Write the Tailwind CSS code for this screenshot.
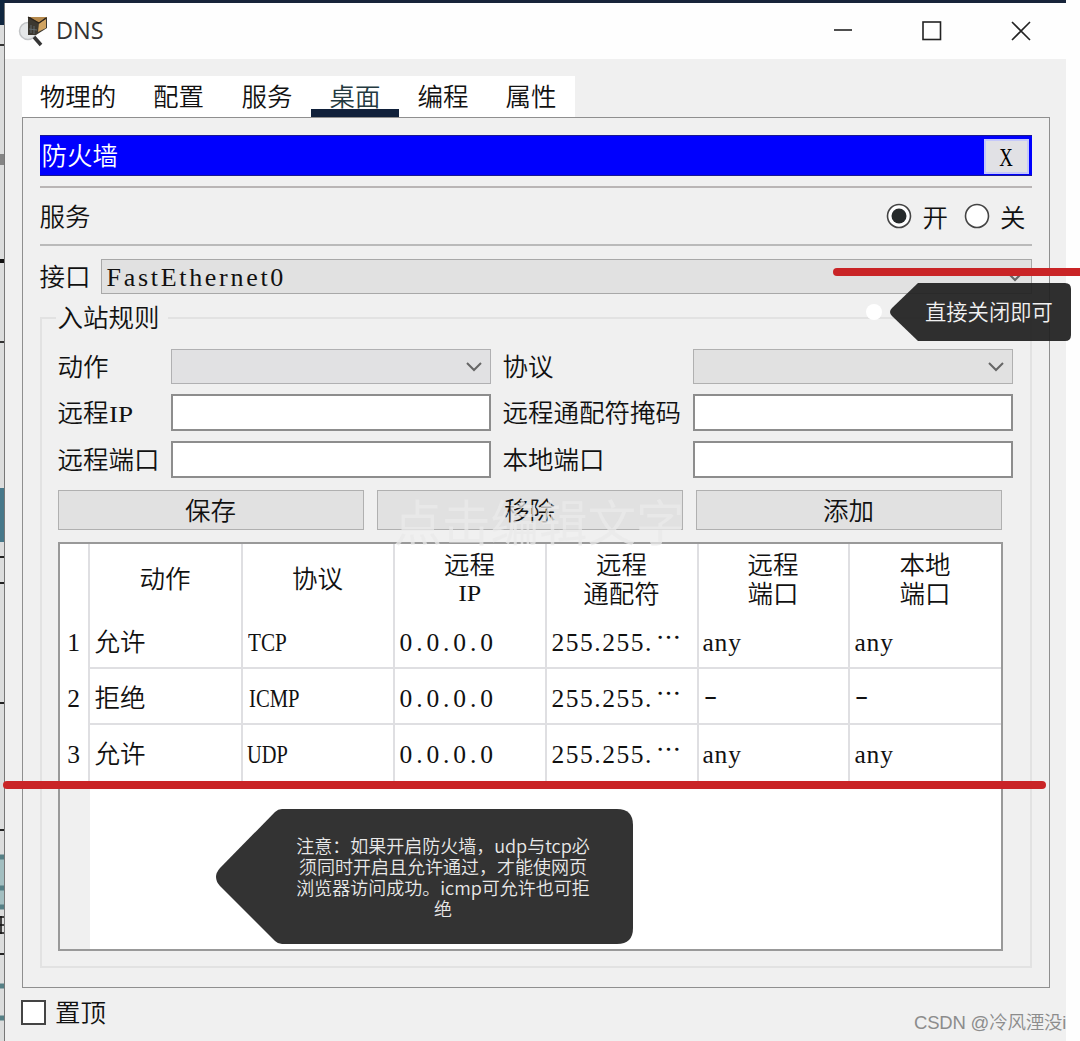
<!DOCTYPE html>
<html lang="zh-CN">

<head>
    <meta charset="UTF-8">
    <meta name="viewport" content="width=device-width, initial-scale=1.0">
    <title>DNS</title>
    <script src="https://cdn.jsdelivr.net/npm/@tailwindcss/browser@4"></script>
</head>

<body class="bg-white">
    <div class="relative flex w-[1080px] h-[1041px] overflow-hidden bg-[#fefefe] font-['Noto_Sans_CJK_SC',sans-serif] font-[350] text-[25.5px] text-[#111]">

        <!-- Sliver of the workspace behind the window -->
        <svg class="w-[5px] h-full shrink-0" viewBox="0 0 5 1041">
            <rect width="5" height="1041" fill="#dcdddd" />
            <rect width="5" height="25" fill="#10263f" />
            <rect y="44" width="5" height="2" fill="#333" />
            <rect y="154" width="5" height="11" fill="#858585" />
            <rect y="259" width="5" height="4" fill="#111" />
            <rect y="341" width="5" height="2" fill="#333" />
            <rect y="488" width="5" height="54" fill="#47788a" />
            <path d="M0 557H5M0 583H5M0 703H5M0 830H5M0 954H5" stroke="#222" stroke-width="2" />
            <rect y="856" width="5" height="52" fill="#a3bfc1" />
            <path d="M0 857H5M0 888H5M0 907H5M0 986H5M0 1018H5" stroke="#568086" stroke-width="5" />
            <path d="M0 917H5M0 925H5M0 933H5M1 916V934" stroke="#111" stroke-width="1.5" />
            <path d="M4.5 3V1041" stroke="#777" />
        </svg>

        <!-- Window -->
        <div class="flex flex-col w-[1061px] h-full shrink-0 bg-[#f0f0f0] border-t-[3px] border-[#17243a]">

            <!-- Title bar -->
            <div class="flex items-center h-[56px] bg-[#fefefe] pl-[13px] pr-[35px] shrink-0">
                <svg class="w-[32px] h-[32px] shrink-0" viewBox="0 0 32 32">
                    <circle cx="10" cy="16" r="8.500" fill="#e5e7e8" stroke="#c2c4c6" stroke-width="1.500" />
                    <path d="M16 22L23 30" stroke="#353535" stroke-width="3.500" />
                    <path d="M10 2L29 2L29 13L18 20L10 20Z" fill="#3c3830" />
                    <path d="M12 2L29 2L21 8Z" fill="#b68a4d" />
                    <path d="M21 8L28 4L28 13L20 17Z" fill="#d1a461" />
                    <path d="M10 2L21 8L28 3" stroke="#2c241b" stroke-width="1.200" fill="none" />
                    <path d="M13 10V18M16 11V19M11 14L19 15" stroke="#68747a" stroke-width=".8" />
                </svg>
                <div class="ml-[6px] font-['Open_Sans',sans-serif] font-normal text-[23.5px] text-[#333]">DNS</div>
                <svg class="ml-auto w-[198px] h-[24px]" viewBox="0 0 198 24" fill="none" stroke="#222" stroke-width="1.600">
                    <path d="M1 11H19" />
                    <rect x="90" y="3" width="17.500" height="17.500" />
                    <path d="M179 3L197 21M197 3L179 21" />
                </svg>
            </div>

            <!-- Tabs -->
            <div class="flex w-[553px] h-[41px] mt-[17px] ml-[17px] bg-white leading-[37px] text-center shrink-0">
                <div class="w-[112px]">物理的</div>
                <div class="w-[89px]">配置</div>
                <div class="w-[88px]">服务</div>
                <div class="w-[88px] border-b-[8px] border-[#10203a] text-[#243a40]">桌面</div>
                <div class="w-[88px]">编程</div>
                <div class="w-[88px]">属性</div>
            </div>

            <!-- Desktop panel -->
            <div class="w-[1028px] h-[871px] ml-[16.500px] border-[1.500px] border-[#8f8f8f] pt-[17px] px-[17px] shrink-0">
                <div class="flex h-[41px] bg-[#0000fe] border-y border-[#1a1a90] text-white">
                    <div class="pl-[2px] leading-[36px]">防火墙</div>
                    <button class="ml-auto mr-[3px] mt-[3px] w-[45px] h-[35px] bg-[#e1e1e5] border-2 border-[#c5c8fa] text-black font-['Liberation_Serif',serif] font-normal text-[25px] leading-[34px]"><span class="inline-block scale-x-75">X</span></button>
                </div>
                <div class="mt-[10px] h-[2px] bg-[#b9b5b5]"></div>

                <div class="flex items-center h-[56px] leading-[54px]">
                    <div class="-mt-[3px]">服务</div>
                    <svg class="ml-auto w-[26px] h-[26px]" viewBox="0 0 26 26">
                        <circle cx="13" cy="13" r="11.500" fill="#fff" stroke="#444" stroke-width="1.600" />
                        <circle cx="13" cy="13" r="7.500" fill="#262a2b" />
                    </svg>
                    <div class="ml-[10px] -mt-[1px]">开</div>
                    <svg class="ml-[16px] w-[26px] h-[26px]" viewBox="0 0 26 26">
                        <circle cx="13" cy="13" r="11.500" fill="#fff" stroke="#444" stroke-width="1.600" />
                    </svg>
                    <div class="ml-[10px] mr-[6px] -mt-[1px]">关</div>
                </div>
                <div class="h-[2px] bg-[#bababa]"></div>

                <div class="flex mt-[13px] h-[35px]">
                    <div class="w-[61px] leading-[32px]">接口</div>
                    <div class="flex items-center justify-between flex-1 bg-[#e1e1e1] border-[1.500px] border-[#a8a8a8] pl-[5px] pr-[7px] font-['Liberation_Serif',serif] font-normal text-[26px] tracking-[2.700px]">
                        <span class="pt-[2px]">FastEthernet0</span>
                        <svg class="w-[18px] h-[10px]" viewBox="0 0 18 10" fill="none" stroke="#666" stroke-width="2"><path d="M2 1L9 8L16 1" /></svg>
                    </div>
                </div>

                <!-- Inbound rules -->
                <div class="mt-[23px] h-[651px] border-2 border-[#e2e2e2] px-[16px]">
                    <div class="w-[112px] h-[30px] -mt-[18px] -ml-[2px] pl-[2px] bg-[#f0f0f0] leading-[30px] whitespace-nowrap">入站规则</div>
                    <div class="grid grid-cols-[113px_320px_202px_320px] grid-rows-[35px_37px_37px] gap-y-[10px] mt-[18px] leading-[31px] whitespace-nowrap">
                        <div>动作</div>
                        <div class="flex items-center justify-end bg-[#e1e1e3] border-[1.500px] border-[#b0b0b2] pr-[7px]">
                            <svg class="w-[18px] h-[10px]" viewBox="0 0 18 10" fill="none" stroke="#666" stroke-width="2"><path d="M2 1L9 8L16 1" /></svg>
                        </div>
                        <div class="pl-[12px]">协议</div>
                        <div class="flex items-center justify-end bg-[#e1e1e1] border-[1.500px] border-[#b0b0b0] pr-[7px]">
                            <svg class="w-[18px] h-[10px]" viewBox="0 0 18 10" fill="none" stroke="#666" stroke-width="2"><path d="M2 1L9 8L16 1" /></svg>
                        </div>
                        <div class="leading-[34px]">远程<span class="inline-block origin-left scale-x-[1.130] font-['Liberation_Serif',serif] font-normal text-[24px] leading-[30px]">IP</span></div>
                        <div class="bg-white border-2 border-[#8d8d8d]"></div>
                        <div class="pl-[12px] leading-[34px]">远程通配符掩码</div>
                        <div class="bg-white border-2 border-[#8d8d8d]"></div>
                        <div class="leading-[34px]">远程端口</div>
                        <div class="bg-white border-2 border-[#8d8d8d]"></div>
                        <div class="pl-[12px] leading-[34px]">本地端口</div>
                        <div class="bg-white border-2 border-[#8d8d8d]"></div>
                    </div>

                    <div class="relative flex gap-[13px] mt-[12px] h-[40px] leading-[35px] text-center">
                        <div class="w-[306px] bg-[#e1e1e1] border-[1.500px] border-[#b0b0b0]">保存</div>
                        <div class="w-[306px] bg-[#e1e1e1] border-[1.500px] border-[#b0b0b0]">移除</div>
                        <div class="w-[306px] bg-[#e1e1e1] border-[1.500px] border-[#b0b0b0]">添加</div>
                        <!-- Empty text placeholder left on the canvas -->
                        <div class="absolute left-[336px] top-[5px] text-[48.500px] leading-[50px] font-normal text-[#e9e9e9]/75 whitespace-nowrap">点击编辑文字</div>
                    </div>

                    <!-- Rule table -->
                    <div class="mt-[12px] w-[945px] h-[409px] border-2 border-[#999] bg-white">
                        <div class="grid grid-cols-[30px_153px_152px_152px_152px_151px_151px] grid-rows-[69px_56px_56px_56px] h-[405px] bg-[linear-gradient(90deg,#f0f0f0_30px,#fff_30px)] leading-[29px]">
                            <div class="bg-white border-r-2 border-[#dfdfe2]"></div>
                            <div class="grid place-items-center border-r-2 border-[#dfdfe2] pb-[4px]">动作</div>
                            <div class="grid place-items-center border-r-2 border-[#dfdfe2] pb-[4px]">协议</div>
                            <div class="border-r-2 border-[#dfdfe2] pt-[4px] text-center">
                                <div class="h-[29px]">远程</div>
                                <div class="h-[29px] leading-[32px] font-['Liberation_Serif',serif] font-normal text-[24px]"><span class="inline-block scale-x-[1.080]">IP</span></div>
                            </div>
                            <div class="border-r-2 border-[#dfdfe2] pt-[4px] text-center">远程<br>通配符</div>
                            <div class="border-r-2 border-[#dfdfe2] pt-[4px] text-center">远程<br>端口</div>
                            <div class="pt-[4px] text-center">本地<br>端口</div>

                            <div class="bg-white border-r-2 border-[#dfdfe2] text-center leading-[60px] font-['Liberation_Serif',serif] font-normal">1</div>
                            <div class="border-r-2 border-b-2 border-[#dfdfe2] pl-[5px] leading-[53px]">允许</div>
                            <div class="border-r-2 border-b-2 border-[#dfdfe2] pl-[5px] leading-[60px] font-['Liberation_Serif',serif] font-normal"><span class="inline-block origin-left scale-x-[0.830]">TCP</span></div>
                            <div class="border-r-2 border-b-2 border-[#dfdfe2] pl-[5px] leading-[60px] font-['Liberation_Serif',serif] font-normal tracking-[3.900px]">0.0.0.0</div>
                            <div class="border-r-2 border-b-2 border-[#dfdfe2] pl-[5px] leading-[60px] font-['Liberation_Serif',serif] font-normal tracking-[1.500px] whitespace-nowrap">255.255.<span class="relative -top-[4px] text-[25px] tracking-normal ml-[3px]">⋯</span></div>
                            <div class="border-r-2 border-b-2 border-[#dfdfe2] pl-[4px] leading-[60px] font-['Liberation_Serif',serif] font-normal tracking-[0.800px]">any</div>
                            <div class="border-b-2 border-[#dfdfe2] pl-[5px] leading-[60px] font-['Liberation_Serif',serif] font-normal tracking-[0.800px]">any</div>

                            <div class="bg-white border-r-2 border-[#dfdfe2] text-center leading-[60px] font-['Liberation_Serif',serif] font-normal">2</div>
                            <div class="border-r-2 border-b-2 border-[#dfdfe2] pl-[5px] leading-[53px]">拒绝</div>
                            <div class="border-r-2 border-b-2 border-[#dfdfe2] pl-[6px] leading-[60px] font-['Liberation_Serif',serif] font-normal"><span class="inline-block origin-left scale-x-[0.810]">ICMP</span></div>
                            <div class="border-r-2 border-b-2 border-[#dfdfe2] pl-[5px] leading-[60px] font-['Liberation_Serif',serif] font-normal tracking-[3.900px]">0.0.0.0</div>
                            <div class="border-r-2 border-b-2 border-[#dfdfe2] pl-[5px] leading-[60px] font-['Liberation_Serif',serif] font-normal tracking-[1.500px] whitespace-nowrap">255.255.<span class="relative -top-[4px] text-[25px] tracking-normal ml-[3px]">⋯</span></div>
                            <div class="border-r-2 border-b-2 border-[#dfdfe2] pl-[5px] leading-[54px] font-['Liberation_Serif',serif] font-normal"><span class="inline-block origin-left scale-x-[1.550]">-</span></div>
                            <div class="border-b-2 border-[#dfdfe2] pl-[5px] leading-[54px] font-['Liberation_Serif',serif] font-normal"><span class="inline-block origin-left scale-x-[1.550]">-</span></div>

                            <div class="bg-white border-r-2 border-[#dfdfe2] text-center leading-[60px] font-['Liberation_Serif',serif] font-normal">3</div>
                            <div class="border-r-2 border-[#dfdfe2] pl-[5px] leading-[53px]">允许</div>
                            <div class="border-r-2 border-[#dfdfe2] pl-[4px] leading-[60px] font-['Liberation_Serif',serif] font-normal"><span class="inline-block origin-left scale-x-[0.800]">UDP</span></div>
                            <div class="border-r-2 border-[#dfdfe2] pl-[5px] leading-[60px] font-['Liberation_Serif',serif] font-normal tracking-[3.900px]">0.0.0.0</div>
                            <div class="border-r-2 border-[#dfdfe2] pl-[5px] leading-[60px] font-['Liberation_Serif',serif] font-normal tracking-[1.500px] whitespace-nowrap">255.255.<span class="relative -top-[4px] text-[25px] tracking-normal ml-[3px]">⋯</span></div>
                            <div class="border-r-2 border-[#dfdfe2] pl-[4px] leading-[60px] font-['Liberation_Serif',serif] font-normal tracking-[0.800px]">any</div>
                            <div class="pl-[5px] leading-[60px] font-['Liberation_Serif',serif] font-normal tracking-[0.800px]">any</div>
                        </div>
                    </div>
                </div>
            </div>

            <!-- Always on top -->
            <div class="flex items-center h-[48px] pl-[16px] shrink-0">
                <div class="w-[25px] h-[25px] bg-white border-2 border-[#444]"></div>
                <div class="ml-[9px] -mt-[3px] leading-[46px]">置顶</div>
            </div>
        </div>

        <!-- Annotations -->
        <div class="absolute left-[833px] top-[268px] w-[260px] h-[8px] rounded-full bg-[#c92426]"></div>
        <div class="absolute left-[3px] top-[781px] w-[1043px] h-[8px] rounded-full bg-[#c92426]"></div>
        <div class="absolute left-[866px] top-[304px] w-[16px] h-[16px] rounded-full bg-white"></div>

        <div class="absolute left-[890px] top-[283px] w-[181px] h-[58px]">
            <svg class="absolute inset-0" width="181" height="58" viewBox="0 0 181 58">
                <path d="M28 0H175Q181 0 181 6V52Q181 58 175 58H28L2 33Q-2 29 2 25Z" fill="#222" fill-opacity=".94" />
            </svg>
            <div class="relative pl-[35px] leading-[55px] text-[21.300px] text-[#f1f1f1] whitespace-nowrap">直接关闭即可</div>
        </div>

        <div class="absolute left-[216px] top-[809px] w-[417px] h-[135px]">
            <svg class="absolute inset-0" width="417" height="135" viewBox="0 0 417 135">
                <path d="M66 0H401Q417 0 417 16V119Q417 135 401 135H66Q62 135 59 132L4 77Q-4 68 4 59L59 3Q62 0 66 0Z" fill="#333" />
            </svg>
            <div class="relative ml-[67px] w-[320px] pt-[26px] text-center text-[18px] leading-[21px] text-[#e9e9e9] whitespace-nowrap">注意：如果开启防火墙，udp与tcp必<br>须同时开启且允许通过，才能使网页<br>浏览器访问成功。icmp可允许也可拒<br>绝</div>
        </div>

        <div class="absolute left-[914px] top-[1009px] whitespace-nowrap font-['Liberation_Sans','Noto_Sans_CJK_SC',sans-serif] text-[18.500px] leading-[27px] text-[#8c8c8c] tracking-[-0.200px]">CSDN @冷风湮没i</div>
    </div>
</body>

</html>
